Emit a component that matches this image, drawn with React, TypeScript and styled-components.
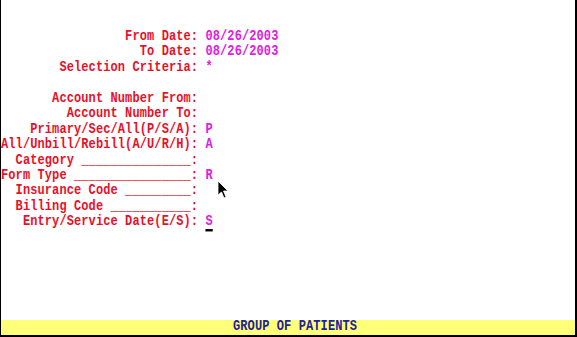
import React from 'react';
import styled, { createGlobalStyle } from 'styled-components';

const GlobalStyle = createGlobalStyle`
    html, body {
        margin: 0;
        padding: 0;
        background: #ffffff;
    }
`;

const Terminal = styled.div`
    position: relative;
    width: 577px;
    height: 337px;
    box-sizing: border-box;
    border-left: 1px solid #000;
    border-right: 2px solid #000;
    border-bottom: 2px solid #000;
    background: #ffffff;
    display: flex;
    flex-direction: column;
    font-family: 'Liberation Mono', 'DejaVu Sans Mono', monospace;
    font-weight: bold;
    font-size: 12px;
    letter-spacing: 0.1px;
    overflow: hidden;
`;

const Screen = styled.div`
    flex: 1;
    padding-top: 30px;
    display: flex;
    flex-direction: column;
`;

const Row = styled.div`
    height: 15.45px;
    line-height: 15.45px;
    white-space: pre;
    display: flex;
    transform: scaleY(1.2);
`;

const Label = styled.span`
    color: #e8102a;
`;

const Value = styled.span<{ $cursor?: boolean }>`
    color: #e020e0;
    text-decoration: ${({ $cursor }) => ($cursor ? 'underline' : 'none')};
    text-decoration-color: #000;
    text-decoration-thickness: 2px;
    text-underline-offset: 3px;
`;

const StatusBar = styled.div`
    height: 15px;
    line-height: 15px;
    background: #ffff78;
    color: #22229a;
    padding-left: 232px;
    white-space: pre;
    span {
        display: inline-block;
        transform: scaleY(1.15);
    }
`;

const Pointer = styled.svg`
    position: absolute;
    left: 216px;
    top: 180px;
`;

type Field = { label: string; value?: string; cursor?: boolean };

const fields: (Field | null)[] = [
    { label: 'From Date:', value: '08/26/2003' },
    { label: 'To Date:', value: '08/26/2003' },
    { label: 'Selection Criteria:', value: '*' },
    null,
    { label: 'Account Number From:' },
    { label: 'Account Number To:' },
    { label: 'Primary/Sec/All(P/S/A):', value: 'P' },
    { label: 'All/Unbill/Rebill(A/U/R/H):', value: 'A' },
    { label: '  Category _______________:' },
    { label: 'Form Type ________________:', value: 'R' },
    { label: '  Insurance Code _________:' },
    { label: '  Billing Code ___________:' },
    { label: 'Entry/Service Date(E/S):', value: 'S', cursor: true },
];

export default function App() {
    return (
        <>
            <GlobalStyle />
            <Terminal>
                <Screen>
                    {fields.map((f, i) =>
                        f ? (
                            <Row key={i}>
                                <Label>{f.label.padStart(27, ' ') + ' '}</Label>
                                {f.value && <Value $cursor={f.cursor}>{f.value}</Value>}
                            </Row>
                        ) : (
                            <Row key={i}> </Row>
                        )
                    )}
                </Screen>
                <StatusBar>
                    <span>GROUP OF PATIENTS</span>
                </StatusBar>
                <Pointer width="12" height="19" viewBox="0 0 12 19">
                    <path
                        d="M1 1 L1 15 L4.5 12 L7 18 L9 17 L6.5 11 L11 11 Z"
                        fill="#000"
                        stroke="#fff"
                        strokeWidth="0.8"
                    />
                </Pointer>
            </Terminal>
        </>
    );
}
